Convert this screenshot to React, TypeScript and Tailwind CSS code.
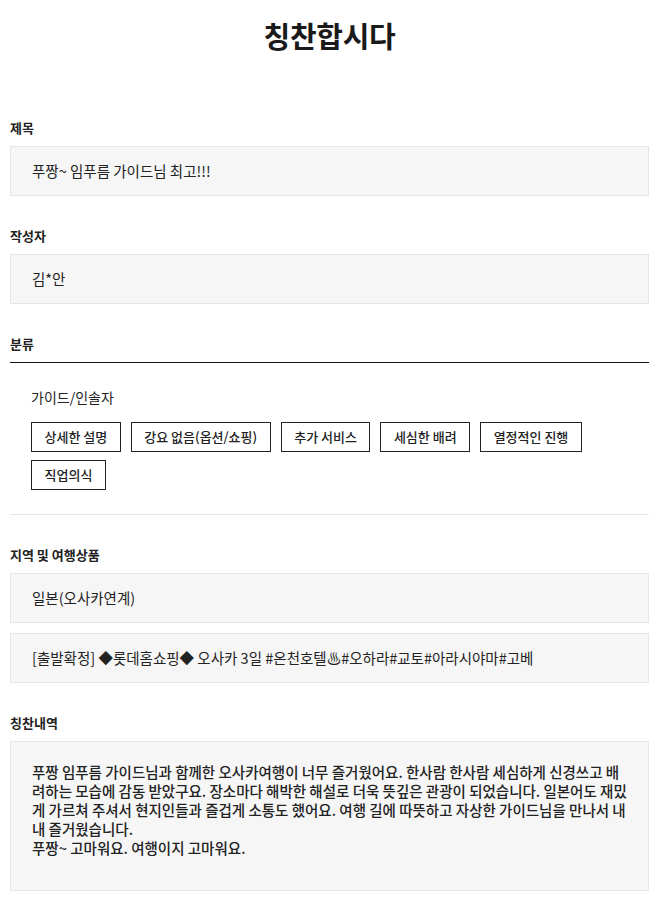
const tags = ["상세한 설명", "강요 없음(옵션/쇼핑)", "추가 서비스", "세심한 배려", "열정적인 진행", "직업의식"];

const Label = ({ children }: { children: React.ReactNode }) => (
  <h3 className="text-[13px] leading-[19px] font-bold text-[#222] mb-[9px]">{children}</h3>
);

const Field = ({ children }: { children: React.ReactNode }) => (
  <div className="bg-[#f6f6f6] border border-[#e6e6e6] h-[50px] flex items-center px-[21px] text-[14.5px] text-[#222]">
    {children}
  </div>
);

export default function App() {
  return (
    <div
      className="bg-white w-[659px] min-h-[901px] px-[10px] text-[#222]"
      style={{ fontFamily: '"Noto Sans CJK KR", "Noto Sans", sans-serif' }}
    >
      <h1 className="pt-[14px] text-center text-[29px] leading-[42px] font-bold tracking-[-0.3px] text-[#1a1a1a]">
        칭찬합시다
      </h1>

      <section className="mt-[62px]">
        <Label>제목</Label>
        <Field>푸짱~ 임푸름 가이드님 최고!!!</Field>
      </section>

      <section className="mt-[30px]">
        <Label>작성자</Label>
        <Field>김*안</Field>
      </section>

      <section className="mt-[30px]">
        <h3 className="text-[13px] leading-[19px] font-bold pb-[9px] border-b border-[#111]">분류</h3>
        <div className="px-[21px] pt-[24px] pb-[24px] border-b border-[#e5e5e5]">
          <p className="text-[14px] leading-[20px]">가이드/인솔자</p>
          <div className="mt-[15px] flex flex-wrap gap-x-[10px] gap-y-[8px]">
            {tags.map((t) => (
              <span
                key={t}
                className="h-[30px] px-[12.5px] border border-[#222] flex items-center text-[13px] font-medium"
              >
                {t}
              </span>
            ))}
          </div>
        </div>
      </section>

      <section className="mt-[30px]">
        <Label>지역 및 여행상품</Label>
        <Field>일본(오사카연계)</Field>
        <div className="mt-[10px]">
          <Field>[출발확정] ◆롯데홈쇼핑◆ 오사카 3일 #온천호텔♨#오하라#교토#아라시야마#고베</Field>
        </div>
      </section>

      <section className="mt-[30px] pb-[10px]">
        <Label>칭찬내역</Label>
        <div className="bg-[#f6f6f6] border border-[#e6e6e6] h-[150px] pl-[21px] pr-[17px] pt-[20px] text-[14.5px] leading-[19px] font-medium">
          푸짱 임푸름 가이드님과 함께한 오사카여행이 너무 즐거웠어요. 한사람 한사람 세심하게 신경쓰고 배려하는 모습에 감동 받았구요.
          장소마다 해박한 해설로 더욱 뜻깊은 관광이 되었습니다. 일본어도 재밌게 가르쳐 주셔서 현지인들과 즐겁게 소통도 했어요. 여행
          길에 따뜻하고 자상한 가이드님을 만나서 내내 즐거웠습니다.
          <br />
          푸짱~ 고마워요. 여행이지 고마워요.
        </div>
      </section>
    </div>
  );
}
